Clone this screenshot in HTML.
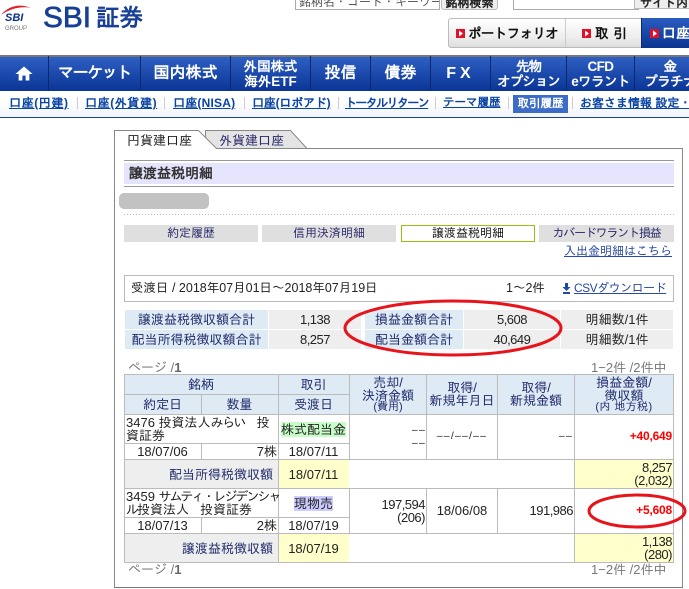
<!DOCTYPE html>
<html lang="ja"><head><meta charset="utf-8"><title>SBI証券</title>
<style>
html,body{margin:0;padding:0;background:#fff;width:689px;height:589px;overflow:hidden}
body{position:relative;font:13px/15px "Liberation Sans","IPAGothic","Noto Sans CJK JP",sans-serif;color:#222}
div,a{position:absolute;box-sizing:border-box;white-space:nowrap}
.nav{top:56px;height:35px;color:#fff;font-size:16px;font-weight:bold;text-align:center;border-right:1px solid #0a2a70;display:flex;align-items:center;justify-content:center;line-height:16px;white-space:normal}
.nav.s{font-size:13.5px;line-height:15px;font-weight:bold}
.sub{top:96px;color:#0a45a5;font-size:12px;line-height:15px;font-weight:bold;text-decoration:underline}
.sep{top:97px;width:1px;height:12px;background:#ccc}
.c{display:flex;align-items:center;justify-content:center}
.r{display:flex;align-items:center;justify-content:flex-end;padding-right:1px}
.btn{top:225px;height:17px;background:#dfdfdf;color:#2b2b6b;font-size:12px;text-align:center;line-height:17px}
.s1{height:19px;line-height:19px;text-align:center}
.blue{background:#deeaf4;color:#1f2a6b}
.gr{background:#eee}
.n{letter-spacing:-.5px}
.k{letter-spacing:-2px}
.k1{letter-spacing:-1.5px}
.d{font-size:10.5px;letter-spacing:1.2px}
</style></head><body>

<!-- logo -->
<svg style="position:absolute;left:0;top:0" width="150" height="34">
<path d="M1 15C8 6 20 3 31 8C22 6 11 8 1 15Z" fill="#e0202c"/>
<text x="5" y="21" font-family="Liberation Sans" font-size="11" font-weight="bold" font-style="italic" fill="#0c2f8a">SBI</text>
<text x="5" y="30" font-family="Liberation Sans" font-size="6" fill="#777">GROUP</text>
<text x="43" y="27" font-family="Liberation Sans" font-size="29" fill="#173f96" stroke="#173f96" stroke-width=".7" textLength="48" lengthAdjust="spacingAndGlyphs">SBI</text>
<text x="96" y="26" font-family="IPAGothic,Noto Sans CJK JP,sans-serif" font-size="24" font-weight="bold" fill="#173f96" textLength="47" lengthAdjust="spacingAndGlyphs">証券</text>
</svg>

<!-- top search fragments -->
<div style="left:295px;top:-10px;width:145px;height:20px;border:1px solid #aaa;background:#fff;color:#555;font-size:12px;line-height:22px;padding-left:3px;overflow:hidden">銘柄名・コード・キーワード</div>
<div style="left:441px;top:-10px;width:57px;height:20px;border:1px solid #bbb;border-radius:3px;background:#eee;font-size:12px;font-weight:bold;line-height:24px;text-align:center;overflow:hidden">銘柄検索</div>
<div style="left:513px;top:-10px;width:126px;height:20px;border:1px solid #aaa;background:#fff"></div>
<div style="left:634px;top:-10px;width:60px;height:19px;border:1px solid #bbb;background:#eee;font-size:12px;font-weight:bold;line-height:24px;padding-left:5px;overflow:hidden">サイト内</div>

<!-- top buttons -->
<div style="left:448px;top:18px;width:241px;height:30px;border:1px solid #bbb;border-radius:3px;background:linear-gradient(#fff,#eee 65%,#ddd)"></div>
<div style="left:565px;top:19px;width:1px;height:28px;background:#ccc"></div>
<div style="left:641px;top:18px;width:48px;height:30px;background:linear-gradient(#2a5cc0,#0a3390);border-left:1px solid #0a2a70"></div>
<svg style="position:absolute;left:456px;top:29px" width="9" height="9"><rect width="9" height="9" fill="#e0102a"/><path d="M3 1.5L7 4.5L3 7.5Z" fill="#fff"/></svg>
<svg style="position:absolute;left:582px;top:29px" width="9" height="9"><rect width="9" height="9" fill="#e0102a"/><path d="M3 1.5L7 4.5L3 7.5Z" fill="#fff"/></svg>
<svg style="position:absolute;left:650px;top:29px" width="9" height="9"><rect width="9" height="9" fill="#e0102a"/><path d="M3 1.5L7 4.5L3 7.5Z" fill="#fff"/></svg>
<div style="left:468px;top:26px;font-size:13.5px;line-height:15px;font-weight:bold;color:#111;letter-spacing:-.6px">ポートフォリオ</div>
<div style="left:595px;top:26px;font-size:13.5px;line-height:15px;font-weight:bold;color:#111;letter-spacing:5px">取引</div>
<div style="left:662px;top:26px;font-size:14px;line-height:15px;font-weight:bold;color:#fff">口座</div>

<!-- nav -->
<div style="left:0;top:55px;width:689px;height:2px;background:#777"></div>
<div style="left:0;top:57px;width:689px;height:34px;background:linear-gradient(#2e5fc2,#0a3596)"></div>
<div class="nav" style="left:0;width:49px"><svg width="18" height="15" viewBox="0 0 16 14"><path d="M8 .5L0 7.5H3V13.5H6.5V9H9.5V13.5H13V7.5H16Z" fill="#fff"/></svg></div>
<div class="nav" style="left:49px;width:92px;letter-spacing:-1.4px">マーケット</div>
<div class="nav" style="left:141px;width:90px">国内株式</div>
<div class="nav s" style="left:231px;width:80px">外国株式<br>海外ETF</div>
<div class="nav" style="left:311px;width:60px">投信</div>
<div class="nav" style="left:371px;width:60px">債券</div>
<div class="nav" style="left:431px;width:60px;letter-spacing:4px">FX</div>
<div class="nav s" style="left:491px;width:76px;letter-spacing:-1px">先物<br>オプション</div>
<div class="nav s" style="left:567px;width:68px;letter-spacing:-.6px">CFD<br>eワラント</div>
<div class="nav s" style="left:635px;width:70px;border:0;letter-spacing:-.6px">金<br>プラチナ</div>

<!-- sub nav -->
<div style="left:0;top:91px;width:689px;height:27px;background:linear-gradient(#fff 40%,#f1f4fa);border-bottom:1px solid #24407f"></div>
<a class="sub" style="left:9px;letter-spacing:.6px">口座(円建)</a><div class="sep" style="left:77px"></div>
<a class="sub" style="left:85px;letter-spacing:.6px">口座(外貨建)</a><div class="sep" style="left:164px"></div>
<a class="sub" style="left:173px;letter-spacing:.2px">口座(NISA)</a><div class="sep" style="left:244px"></div>
<a class="sub" style="left:252px;letter-spacing:-.2px">口座(ロボアド)</a><div class="sep" style="left:338px"></div>
<a class="sub" style="left:345px;letter-spacing:-1.6px">トータルリターン</a><div class="sep" style="left:435px"></div>
<a class="sub" style="left:443px;font-size:11.5px">テーマ履歴</a><div class="sep" style="left:508px"></div>
<div style="left:513px;top:95px;width:55px;height:18px;background:#3d6cc8;color:#fff;font-size:11.5px;font-weight:bold;line-height:18px;text-align:center">取引履歴</div><div class="sep" style="left:572px"></div>
<a class="sub" style="left:580px">お客さま情報 設定・変更</a>

<!-- panel -->
<svg style="position:absolute;left:0;top:0" width="689" height="589" fill="none">
<path d="M205.5 148V130.5H290.5L307 148.5H205Z" fill="#e4e4e4" stroke="#888"/>
<path d="M114.5 587.5V130.5H198.5L216.5 148.5H682.5V587.5" fill="#fff" stroke="#888"/>
<path d="M114 587.5H683" stroke="#777"/>
<path d="M124 214.5H674" stroke="#bbb" stroke-dasharray="1 2"/>
</svg>
<div style="left:127px;top:133px;font-size:13px;color:#222">円貨建口座</div>
<div style="left:219px;top:133px;font-size:13px;color:#2b2b6b">外貨建口座</div>

<div style="left:124px;top:160px;width:550px;height:27px;border-top:1px solid #999;border-bottom:1px solid #999;background:linear-gradient(#fff 2px,#e4e4fc 2px,#e4e4fc 23px,#fff 23px)"></div>
<div style="left:129px;top:166px;font-size:14px;font-weight:bold;color:#333">譲渡益税明細</div>
<div style="left:119px;top:193px;width:90px;height:16px;background:#c2c2c2;border-radius:5px"></div>

<div class="btn" style="left:124px;width:134px">約定履歴</div>
<div class="btn" style="left:262px;width:134px">信用決済明細</div>
<div class="btn" style="left:401px;width:134px;background:#fff;border:1px solid #9cbe10;color:#111;line-height:15px">譲渡益税明細</div>
<div class="btn" style="left:539px;width:135px;letter-spacing:-1.2px">カバードワラント損益</div>
<a style="left:564px;top:244px;font-size:12px;color:#2a4aa5;text-decoration:underline">入出金明細はこちら</a>

<div style="left:124px;top:275px;width:550px;height:27px;border:1px solid #bbb"></div>
<div style="left:131px;top:281px;color:#222;font-size:12.5px">受渡日 / 2018年07月01日～2018年07月19日</div>
<div style="left:506px;top:281px;font-size:12.5px">1～2件</div>
<svg style="position:absolute;left:562px;top:283px" width="9" height="11"><path d="M3 0H6V4H8.5L4.5 8L.5 4H3ZM1 9H8V11H1Z" fill="#1c4aa5"/></svg>
<a style="left:574px;top:281px;font-size:12px;color:#2a4aa5;text-decoration:underline;letter-spacing:-.5px">CSVダウンロード</a>

<!-- summary -->
<div class="s1 blue" style="left:125px;top:310px;width:143px">譲渡益税徴収額合計</div>
<div class="s1 gr n" style="left:269px;top:310px;width:92px">1,138</div>
<div class="s1 blue" style="left:365px;top:310px;width:98px">損益金額合計</div>
<div class="s1 gr n" style="left:464px;top:310px;width:96px">5,608</div>
<div class="s1 gr" style="left:561px;top:310px;width:112px">明細数/1件</div>
<div class="s1 blue" style="left:125px;top:330px;width:143px">配当所得税徴収額合計</div>
<div class="s1 gr n" style="left:269px;top:330px;width:92px">8,257</div>
<div class="s1 blue" style="left:365px;top:330px;width:98px">配当金額合計</div>
<div class="s1 gr n" style="left:464px;top:330px;width:96px">40,649</div>
<div class="s1 gr" style="left:561px;top:330px;width:112px">明細数/1件</div>

<div style="left:128px;top:360px;color:#777">ページ /<b style="color:#666">1</b></div>
<div style="left:591px;top:360px;color:#777">1−2件 /2件中</div>

<!-- table backgrounds -->
<div style="left:124px;top:374px;width:550px;height:40px;background:#deeaf4"></div>
<div style="left:124px;top:459px;width:154px;height:29px;background:#eee"></div>
<div style="left:124px;top:533px;width:154px;height:29px;background:#eee"></div>
<div style="left:278px;top:459px;width:71px;height:29px;background:#ffc"></div>
<div style="left:278px;top:533px;width:71px;height:29px;background:#ffc"></div>
<div style="left:574px;top:459px;width:99px;height:29px;background:#ffc"></div>
<div style="left:574px;top:533px;width:99px;height:29px;background:#ffc"></div>

<!-- table lines -->
<svg style="position:absolute;left:0;top:0" width="689" height="589" stroke="#bbb" fill="none" shape-rendering="crispEdges">
<path d="M124.5 374.5H673.5V562.5H124.5Z"/>
<path d="M124 394.5H349M124 414.5H674M124 443.5H349M124 459.5H674M124 488.5H674M124 517.5H349M124 533.5H674"/>
<path d="M278.5 374V562M349.5 374V459M349.5 488V533M426.5 374V459M426.5 488V533M497.5 374V459M497.5 488V533M574.5 374V562M201.5 394V414M201.5 443V459M201.5 517V533"/>
</svg>

<!-- table head -->
<div class="c" style="left:124px;top:375px;width:154px;height:19px;color:#1f2a6b">銘柄</div>
<div class="c" style="left:278px;top:375px;width:71px;height:19px;color:#1f2a6b">取引</div>
<div class="c" style="left:124px;top:395px;width:77px;height:19px;color:#1f2a6b">約定日</div>
<div class="c" style="left:201px;top:395px;width:77px;height:19px;color:#1f2a6b">数量</div>
<div class="c" style="left:278px;top:395px;width:71px;height:19px;color:#1f2a6b">受渡日</div>
<div style="left:350px;top:376px;width:76px;text-align:center;line-height:13px;color:#1f2a6b">売却/<br>決済金額<br><span style="font-size:11px;line-height:11px;display:block">(費用)</span></div>
<div style="left:427px;top:381px;width:70px;text-align:center;line-height:13px;color:#1f2a6b">取得/<br>新規年月日</div>
<div style="left:498px;top:381px;width:76px;text-align:center;line-height:13px;color:#1f2a6b">取得/<br>新規金額</div>
<div style="left:575px;top:376px;width:98px;text-align:center;line-height:13px;color:#1f2a6b">損益金額/<br>徴収額<br><span style="font-size:11px;letter-spacing:.4px;line-height:11px;display:block">(内 地方税)</span></div>

<!-- row 1 -->
<div style="left:126px;top:416px;line-height:13px;color:#222">3476 投資法人<span class="k1">みらい　</span>投<br>資証券</div>
<div class="c" style="left:278px;top:415px;width:71px;height:28px"><span style="background:#c8fcc8;color:#222">株式配当金</span></div>
<div class="c" style="left:124px;top:444px;width:77px;height:15px">18/07/06</div>
<div class="r" style="left:201px;top:444px;width:77px;height:15px">7株</div>
<div class="c" style="left:278px;top:444px;width:71px;height:15px">18/07/11</div>
<div class="d" style="left:350px;top:424px;width:76px;text-align:right;line-height:13px">––<br>––</div>
<div class="c d" style="left:427px;top:429px;width:70px;height:15px">––/––/––</div>
<div class="r d" style="left:498px;top:429px;width:76px;height:15px">––</div>
<div class="r" style="left:575px;top:429px;width:98px;height:15px;color:#f00;font-weight:bold;font-size:12px;letter-spacing:-.2px">+40,649</div>

<div class="r" style="left:124px;top:460px;width:154px;height:28px;color:#1f2a6b;padding-right:5px">配当所得税徴収額</div>
<div class="c" style="left:278px;top:460px;width:71px;height:28px">18/07/11</div>
<div class="n" style="left:575px;top:461px;width:98px;text-align:right;padding-right:1px;line-height:13px">8,257<br>(2,032)</div>

<!-- row 2 -->
<div style="left:126px;top:490px;line-height:13px;color:#222">3459 <span class="k">サムティ・レジデンシャ</span><br><span class="k">ル</span>投資法人<span class="k">　</span>投資証券</div>
<div class="c" style="left:278px;top:489px;width:71px;height:28px"><span style="background:#ccf;color:#222">現物売</span></div>
<div class="c" style="left:124px;top:518px;width:77px;height:15px">18/07/13</div>
<div class="r" style="left:201px;top:518px;width:77px;height:15px">2株</div>
<div class="c" style="left:278px;top:518px;width:71px;height:15px">18/07/19</div>
<div class="n" style="left:350px;top:498px;width:76px;text-align:right;padding-right:1px;line-height:13px">197,594<br>(206)</div>
<div class="c" style="left:427px;top:503px;width:70px;height:15px">18/06/08</div>
<div class="r n" style="left:498px;top:503px;width:76px;height:15px">191,986</div>
<div class="r" style="left:575px;top:503px;width:98px;height:15px;color:#f00;font-weight:bold;font-size:12px;letter-spacing:-.2px">+5,608</div>

<div class="r" style="left:124px;top:534px;width:154px;height:28px;color:#1f2a6b;padding-right:5px">譲渡益税徴収額</div>
<div class="c" style="left:278px;top:534px;width:71px;height:28px">18/07/19</div>
<div class="n" style="left:575px;top:535px;width:98px;text-align:right;padding-right:1px;line-height:13px">1,138<br>(280)</div>

<div style="left:128px;top:562px;color:#777">ページ /<b style="color:#666">1</b></div>
<div style="left:591px;top:562px;color:#777">1−2件 /2件中</div>

<!-- red ovals -->
<svg style="position:absolute;left:0;top:0" width="689" height="589" fill="none" stroke="#e8141c" stroke-width="3">
<ellipse cx="453" cy="328" rx="108" ry="27"/>
<ellipse cx="637" cy="511" rx="48" ry="16"/>
</svg>
</body></html>
